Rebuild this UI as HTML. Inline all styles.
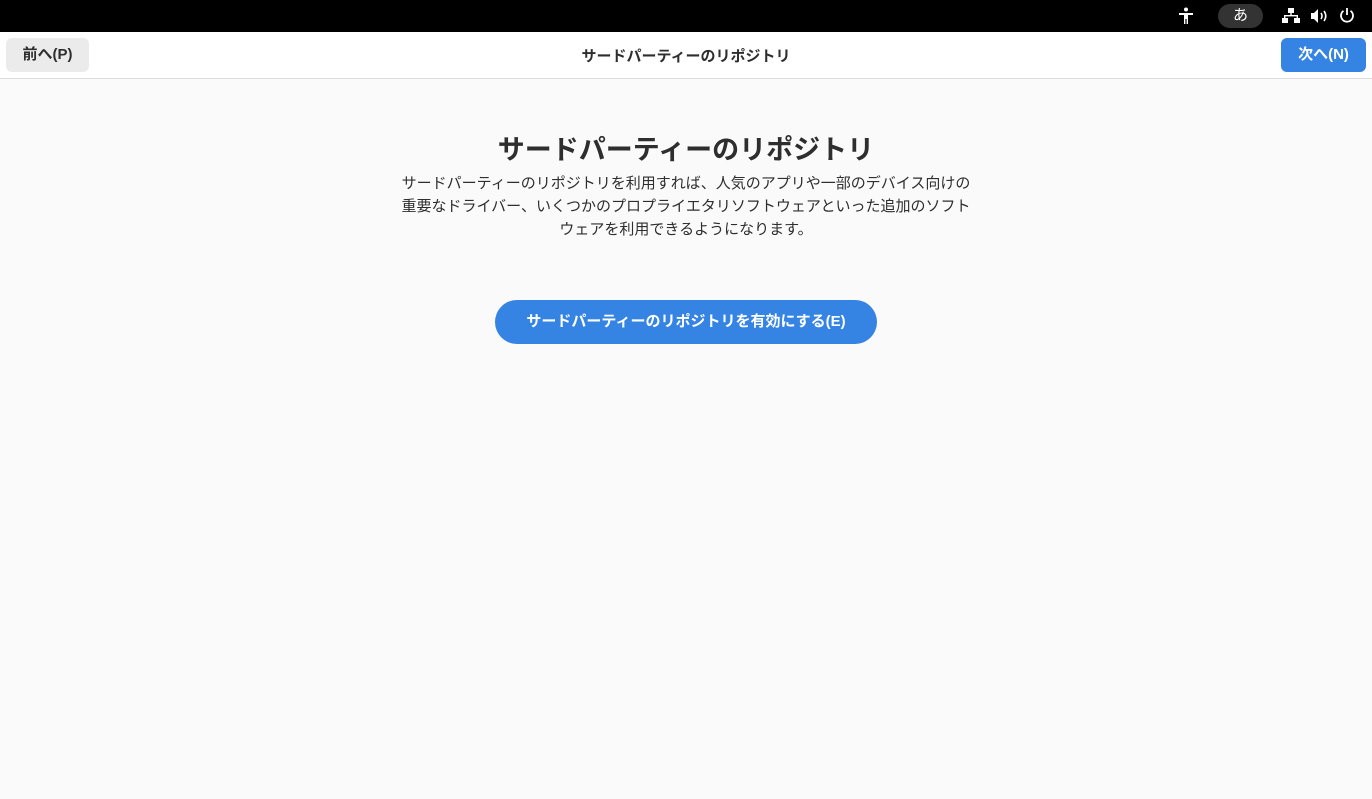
<!DOCTYPE html>
<html><head><meta charset="utf-8"><style>
body{margin:0;width:1372px;height:799px;background:#fafafa;font-family:"Liberation Sans","Noto Sans CJK JP",sans-serif;color:#2e2e2e;overflow:hidden;position:relative}
.top{position:absolute;left:0;top:0;width:1372px;height:32px;background:#000}
.hdr{position:absolute;left:0;top:32px;width:1372px;height:46px;background:#fff;border-bottom:1px solid #dcdcdc}
.btn{position:absolute;top:6px;height:34px;border-radius:6px;font-size:15px;font-weight:bold;line-height:34px;text-align:center}
</style></head><body>
<div class="top">
<svg style="position:absolute;left:1178px;top:7px" width="16" height="18" viewBox="0 0 16 18" fill="#fff"><circle cx="8" cy="2.5" r="2"/><path d="M1 6h14v2h-5v9H8.6v-5h-1.2v5H6V8H1z"/></svg>
<div style="position:absolute;left:1218px;top:4px;width:45px;height:24px;border-radius:12px;background:#333;color:#fff;font-size:15px;text-align:center;line-height:24px">あ</div>
<svg style="position:absolute;left:1282px;top:8px" width="18" height="16" viewBox="0 0 18 16" fill="#fff"><rect x="6" y="0" width="6" height="5"/><rect x="8.3" y="5" width="1.4" height="3"/><rect x="2" y="7" width="14" height="1.4"/><rect x="2" y="7" width="1.4" height="3"/><rect x="14.6" y="7" width="1.4" height="3"/><rect x="0" y="10" width="6" height="5"/><rect x="12" y="10" width="6" height="5"/></svg>
<svg style="position:absolute;left:1310px;top:8px" width="18" height="16" viewBox="0 0 18 16" fill="none" stroke="#fff" stroke-width="1.6"><path d="M1 5h3l4-4v14l-4-4H1z" fill="#fff" stroke="none"/><path d="M11 5q2 3 0 6M14 3q3.5 5 0 10"/></svg>
<svg style="position:absolute;left:1339px;top:7px" width="16" height="17" viewBox="0 0 16 17" fill="none" stroke="#fff" stroke-width="1.8"><path d="M8 1v7"/><path d="M4.5 3.8A6 6 0 1 0 11.5 3.8"/></svg>
</div>
<div class="hdr">
<div class="btn" style="left:6px;width:83px;background:#ebebeb;color:#2e2e2e">前へ(P)</div>
<div style="position:absolute;width:100%;text-align:center;top:13px;font-size:15px;font-weight:bold">サードパーティーのリポジトリ</div>
<div class="btn" style="left:1281px;width:85px;background:#3584e4;color:#fff">次へ(N)</div>
</div>
<div style="position:absolute;width:100%;top:128px;text-align:center;font-size:27px;font-weight:bold">サードパーティーのリポジトリ</div>
<div style="position:absolute;left:286px;width:800px;top:172px;text-align:center;font-size:15px;line-height:23px">サードパーティーのリポジトリを利用すれば、人気のアプリや一部のデバイス向けの<br>重要なドライバー、いくつかのプロプライエタリソフトウェアといった追加のソフト<br>ウェアを利用できるようになります。</div>
<div style="position:absolute;left:495px;top:300px;width:382px;height:44px;border-radius:22px;background:#3584e4;color:#fff;font-size:15px;font-weight:bold;text-align:center;line-height:44px">サードパーティーのリポジトリを有効にする(E)</div>
</body></html>
